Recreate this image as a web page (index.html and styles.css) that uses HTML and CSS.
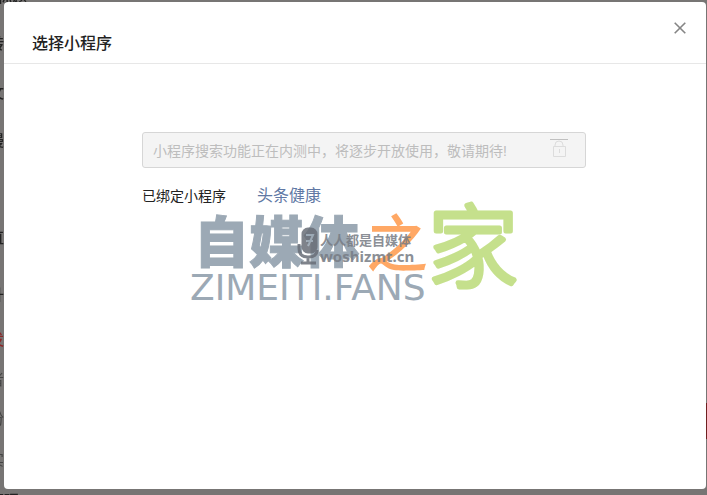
FILE: index.html
```
<!DOCTYPE html>
<html lang="zh-CN">
<head>
<meta charset="utf-8">
<title>选择小程序</title>
<link rel="stylesheet" href="styles.css">
</head>
<body>
<div class="backdrop" aria-hidden="true">
  <span class="bg bg-top">文标题</span>
  <span class="bg bg-1">转</span>
  <span class="bg bg-2">文</span>
  <span class="bg bg-3">漫</span>
  <span class="bg bg-4">直</span>
  <span class="bg bg-5">升</span>
  <span class="bg bg-6 red">发</span>
  <span class="bg bg-7 dim">者</span>
  <span class="bg bg-8 dim">份</span>
  <span class="bg bg-9 dim">实</span>
  <span class="bg bg-10">管理</span>
  <span class="bg-button"></span>
</div>
<main class="dialog" role="dialog" aria-labelledby="title">
  <header class="head">
    <h1 id="title">选择小程序</h1>
    <button class="close" type="button" aria-label="关闭">
      <svg viewBox="0 0 12 12"><path d="M.7.7l10.6 10.6M11.3.7L.7 11.3"/></svg>
    </button>
  </header>
  <section class="content">
    <div class="search">
      <input type="text" disabled aria-label="搜索小程序" placeholder="小程序搜索功能正在内测中，将逐步开放使用，敬请期待!">
      <svg class="lock" viewBox="0 0 18 22"><path class="bar" d="M0 1.5h18"/><path d="M5 9V7a4 4 0 0 1 8 0v2M3.500 8.500h12v10h-12zM9.500 11v4"/></svg>
    </div>
    <div class="bound"><span>已绑定小程序</span><a href="#">头条健康</a></div>
  </section>
  <div class="mark">
    <span class="mark-name">自媒体</span>
    <span class="mark-zhi">之</span>
    <svg class="mark-home" viewBox="0 0 100 112"><text x="4" y="86">家</text></svg>
    <span class="mark-url">ZIMEITI.FANS</span>
    <div class="stamp">
      <svg viewBox="0 0 24 40"><rect x="7" y="3" width="13" height="23" rx="5"/><path d="M3 18v4q0 9 9 9t9-7M12 31v6M5 37h15"/><path class="cut" d="M10 9h7l-5 11M10 15h7"/></svg>
      <p><span>人人都是自媒体</span><b>woshizmt.cn</b></p>
    </div>
  </div>
</main>
</body>
</html>
```
FILE: styles.css
```
* { box-sizing: border-box; }
body {
  margin: 0;
  min-height: 100vh;
  display: flex;
  padding: 2px 1px 6px 4px;
  background: #777574;
  font-family: "Liberation Sans", "Noto Sans CJK SC", sans-serif;
  overflow: hidden;
}
.backdrop { position: fixed; inset: 0; overflow: hidden; }
.bg { position: absolute; left: -11px; font-size: 15px; font-weight: 500; line-height: 20px; color: #222; }
.bg-top { top: -13px; left: -18px; }
.bg-1 { top: 34px; }
.bg-2 { top: 83px; }
.bg-3 { top: 131px; }
.bg-4 { top: 228px; }
.bg-5 { top: 285px; }
.bg-6 { top: 330px; }
.bg-7 { top: 370px; }
.bg-8 { top: 409px; }
.bg-9 { top: 450px; }
.bg-10 { top: 491px; }
.red { color: #8c2828; }
.dim { color: #444; font-weight: 400; }
.bg-button { position: absolute; right: 0; top: 403px; width: 8px; height: 36px; background: #6e2020; }
.dialog {
  position: relative;
  flex: 1;
  background: #fff;
  border-radius: 4px;
}
.head {
  display: flex;
  justify-content: space-between;
  height: 62px;
  padding: 20px 20px 0 28px;
  border-bottom: 1px solid #e7e7e7;
}
h1 { margin: 9px 0 0; font-size: 16px; line-height: 26px; font-weight: 500; color: #222; }
.close { width: 12px; height: 12px; padding: 0; border: 0; background: none; }
.close svg { display: block; width: 12px; height: 12px; fill: none; stroke: #858585; stroke-width: 1.6; }
.content { padding: 68px 120px 0 138px; }
.search { position: relative; }
.search input {
  display: block;
  width: 100%;
  height: 36px;
  padding: 2px 40px 0 10px;
  border: 1px solid #d6d6d6;
  border-radius: 3px;
  background: #f4f4f4;
  font: 14px "Liberation Sans", "Noto Sans CJK SC", sans-serif;
}
.search input::placeholder { color: #bdbdbd; opacity: 1; }
.lock { position: absolute; right: 18px; top: 6px; width: 18px; height: 22px; fill: none; stroke: #dcdcdc; }
.lock .bar { stroke: #c0c0c0; }
.bound { display: flex; align-items: center; gap: 31px; margin-top: 15px; font-size: 14px; line-height: 26px; color: #222; }
.bound a { font-size: 16px; color: #6078a4; text-decoration: none; }
.mark { position: absolute; left: 186px; top: 192px; width: 340px; height: 112px; line-height: 1; pointer-events: none; }
.mark > * { position: absolute; white-space: nowrap; }
.mark-name { left: 4px; top: 14px; font: 900 55px/60px "Noto Sans CJK SC"; color: #9ca9b5; -webkit-text-stroke: 1px #9ca9b5; }
.mark-zhi { left: 176px; top: 15px; font: 500 62px/62px "Noto Sans CJK SC"; color: #ffa865; }
.mark-home { left: 234px; top: 0; width: 100px; height: 112px; }
.mark-home text { font: 300 90px "Noto Sans CJK SC"; fill: #c5e08c; stroke: #c5e08c; stroke-width: 5px; stroke-linejoin: round; }
.mark-url { left: 0; top: 76px; font: 36px/36px "DejaVu Sans", sans-serif; color: #9ca9b5; }
.stamp { left: 106px; top: 32px; display: flex; color: #777c84; opacity: .85; }
.stamp svg { width: 24px; height: 40px; fill: #696e77; stroke: #696e77; stroke-width: 3; }
.stamp path { fill: none; }
.stamp .cut { stroke: #9ca9b5; stroke-width: 2; }
.stamp p { margin: 5px 0 0; font: 700 13px/17px "Noto Sans CJK SC"; }
.stamp span, .stamp b { display: block; }
.stamp b { font: 700 15px/17px "Noto Sans", sans-serif; }
```
